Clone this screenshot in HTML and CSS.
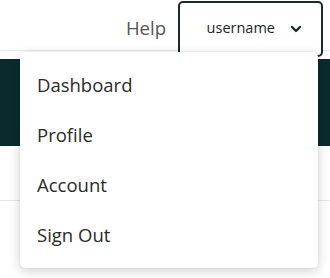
FILE: index.html
```html
<!DOCTYPE html>
<html>
<head>
<meta charset="utf-8">
<link rel="stylesheet" href="styles.css">
</head>
<body>
<div class="page">
  <header class="header">
    <a class="help">Help</a>
    <button class="user-btn">
      <span class="user-name">username</span>
      <svg class="chev" width="12" height="8" viewBox="0 0 12 8"><path d="M2 2 L6 6 L10 2" fill="none" stroke="#1b2b2d" stroke-width="2.4" stroke-linecap="round" stroke-linejoin="round"/></svg>
    </button>
    <nav class="menu">
      <a class="menu-item">Dashboard</a>
      <a class="menu-item">Profile</a>
      <a class="menu-item">Account</a>
      <a class="menu-item">Sign Out</a>
    </nav>
  </header>
  <div class="spacer"></div>
  <div class="band"></div>
  <div class="sub"></div>
</div>
</body>
</html>
```

FILE: styles.css
```css
html, body {
  margin: 0;
  padding: 0;
  background: #fff;
  font-family: "Open Sans", "Noto Sans", sans-serif;
}
.page {
  width: 330px;
  height: 278px;
  overflow: hidden;
  position: relative;
}
.header {
  position: relative;
  height: 50px;
  border-bottom: 1px solid #e9e9e9;
  display: flex;
  justify-content: flex-end;
  align-items: flex-start;
  padding-right: 7px;
  gap: 12px;
}
.help {
  font-size: 18.5px;
  color: #555;
  line-height: 56px;
}
.user-btn {
  margin-top: 1px;
  width: 145px;
  height: 56px;
  box-sizing: border-box;
  border: 2px solid #1b2b2d;
  border-radius: 5px;
  background: #fff;
  display: flex;
  align-items: flex-start;
  justify-content: flex-end;
  padding: 15px 19px 0 0;
  gap: 15px;
  font-family: "Open Sans", "Noto Sans", sans-serif;
}
.user-name {
  font-size: 14.5px;
  color: #1e1e1e;
  line-height: 20px;
}
.chev {
  margin-top: 7px;
}
.menu {
  position: absolute;
  left: 20px;
  top: 52px;
  width: 298px;
  padding: 8px 0;
  background: #fff;
  border-radius: 5px;
  box-shadow: 0 3px 12px rgba(0,0,0,0.18), 0 0 2px rgba(0,0,0,0.08);
  display: flex;
  flex-direction: column;
  z-index: 5;
}
.menu-item {
  height: 50px;
  line-height: 50px;
  padding-left: 17px;
  font-size: 18.5px;
  color: #2a2a2a;
}
.spacer {
  height: 8px;
}
.band {
  height: 87px;
  background: #0b2a2e;
}
.sub {
  height: 54px;
  border-bottom: 1px solid #e4e4e4;
}
```
